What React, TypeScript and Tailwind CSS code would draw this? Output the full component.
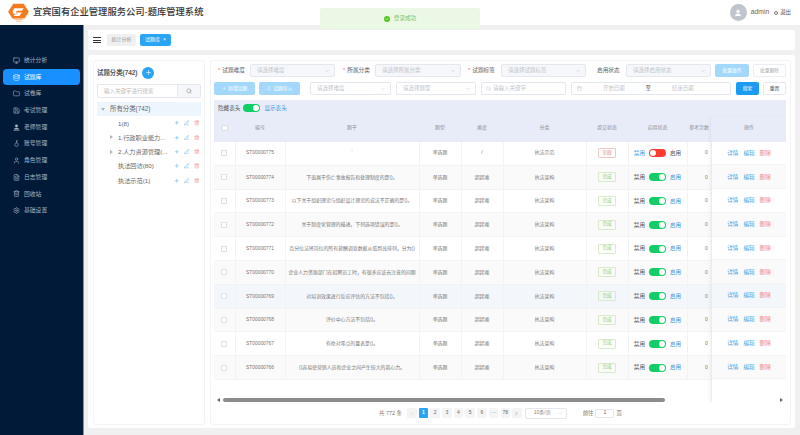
import {
  Calendar, Check, ChevronDown, ChevronLeft, ChevronRight, Database, FileText, Folder, Monitor, PenLine, Plus,
  Save, Search, Settings, Trash2, Upload, User,
} from 'lucide-react'

const font = { fontFamily: '"Liberation Sans", "Noto Sans CJK SC", sans-serif' }

function TeacherIcon({ className }: { className?: string }) {
  return (
    <svg viewBox="0 0 24 24" className={className} fill="currentColor">
      <circle cx="12" cy="7" r="5" />
      <path d="M3 17 C6 13 18 13 21 17 V19 H3 Z" />
      <rect x="2" y="20.5" width="20" height="2" />
    </svg>
  )
}

function AccountIcon({ className }: { className?: string }) {
  return (
    <svg viewBox="0 0 24 24" className={className} fill="none" stroke="currentColor" strokeWidth="2">
      <circle cx="12" cy="16" r="6" />
      <path d="M12 10 V2 H16 M12 6 H15" />
    </svg>
  )
}

const menu = [
  { label: '统计分析', icon: Monitor },
  { label: '试题库', icon: Database },
  { label: '试卷库', icon: Folder },
  { label: '考试管理', icon: Save },
  { label: '老师管理', icon: TeacherIcon },
  { label: '账号管理', icon: AccountIcon },
  { label: '角色管理', icon: User },
  { label: '日志管理', icon: FileText },
  { label: '回收站', icon: Trash2 },
  { label: '基础设置', icon: Settings },
]

const tree = [
  { label: '1(8)', arrow: false },
  { label: '1.行政职业能力...', arrow: true },
  { label: '2.人力资源管理(...', arrow: true },
  { label: '执法回访(80)', arrow: false },
  { label: '执法示范(1)', arrow: false },
]

const rows = [
  { id: 'ST00000775', title: '`', level: '/', cat: '执法示范', draft: true },
  { id: 'ST00000774', title: '下面属于伤亡事故报告和处理制度的是()。', level: '超超难', cat: '执法架构' },
  { id: 'ST00000773', title: '以下关于组织理论与组织设计理论的说法不正确的是()。', level: '超超难', cat: '执法架构' },
  { id: 'ST00000772', title: '关于制度化管理的描述，下列选项错误的是()。', level: '超超难', cat: '执法架构' },
  { id: 'ST00000771', title: '百分位法将岗位的所有薪酬调查数据从低到高排列，分为()', level: '超超难', cat: '执法架构' },
  { id: 'ST00000770', title: '企业人力资源部门在招聘员工时，有很多应该去注意的问题', level: '超超难', cat: '执法架构' },
  { id: 'ST00000769', title: '对培训效果进行反应评估的方法不包括()。', level: '超超难', cat: '执法架构', hover: true },
  { id: 'ST00000768', title: '评价中心方法不包括()。', level: '超超难', cat: '执法架构' },
  { id: 'ST00000767', title: '有绝对零点的量表是()。', level: '超超难', cat: '执法架构' },
  { id: 'ST00000766', title: '()容易使营销人员和企业之间产生较大的离心力。', level: '超超难', cat: '执法架构' },
]

function rowBg(i: number, hover?: boolean) {
  if (hover) return 'bg-[#f3f7fc]'
  return i % 2 === 1 ? 'bg-[#fafafa]' : 'bg-white'
}

function Toggle({ on = true }: { on?: boolean }) {
  return (
    <span className={`flex h-[8px] w-[17px] items-center rounded-full p-px ${on ? 'justify-end bg-[#13ce66]' : 'justify-start bg-[#ff3b30]'}`}>
      <span className="h-[6px] w-[6px] rounded-full bg-white" />
    </span>
  )
}

function SelectBox({ text, width, filled }: { text: string; width: string; filled?: boolean }) {
  return (
    <div className={`flex h-[13px] shrink-0 items-center justify-between rounded-[2px] border border-[#e4e7ed] pl-[6px] pr-[4px] ${width} ${filled ? 'bg-[#f5f7fa]' : 'bg-white'}`}>
      <span className="text-[5.5px] text-[#c0c4cc]">{text}</span>
      <ChevronDown className="h-[6px] w-[6px] text-[#c0c4cc]" />
    </div>
  )
}

function Label({ text, star = true, width }: { text: string; star?: boolean; width: string }) {
  return (
    <span className={`shrink-0 whitespace-nowrap text-[5.7px] text-[#606266] ${width}`}>
      {star && <span className="mr-[2px] text-[#f56c6c]">*</span>}
      {text}
    </span>
  )
}

export default function App() {
  const page = 1

  return (
    <div className="relative flex h-[435px] w-[800px] flex-col overflow-hidden bg-[#f0f0f0]" style={font}>
      <header className="flex h-[25px] shrink-0 items-center bg-white pl-[8px] pr-[9px]">
        <svg viewBox="0 0 24 22" className="h-[19px] w-[21px]">
          <path d="M6 1 H18 L24 10 L19 18 H5 L0 10 Z" fill="#f47a1f" />
          <path d="M7 6 H18 L16 9 H10 L9 11 H16 L13 15 H6 L8 13 H11 L12 12.5 H6 L5 10 Z" fill="#fff" />
          <path d="M7 19 H17 M9 21 H15" stroke="#f9b27a" strokeWidth="1" />
        </svg>
        <h1 className="ml-[4px] text-[9.3px] font-medium text-[#333]">宜宾国有企业管理服务公司-题库管理系统</h1>
        <div className="ml-auto flex items-center">
          <span className="flex h-[17px] w-[17px] items-center justify-center rounded-full bg-[#c0c4cc]">
            <User className="h-[8px] w-[8px] fill-white text-white" />
          </span>
          <span className="ml-[4px] text-[6.8px] text-[#666]">admin</span>
          <span className="ml-[5px] h-[4px] w-[4px] rounded-full border border-[#777]" />
          <span className="ml-[2px] text-[5.4px] text-[#555]">退出</span>
        </div>
      </header>

      <div className="flex min-h-0 flex-1">
        <aside className="w-[84px] shrink-0 border-r border-[#8b949e] bg-[#001a38] pt-[27px]">
          <nav className="flex flex-col">
            {menu.map((item, i) => {
              const Icon = item.icon
              return (
                <div
                  key={item.label}
                  className={`mx-[3px] flex h-[16.7px] items-center rounded-[4px] pl-[10px] ${i === 1 ? 'bg-[#1890ff] text-white' : 'text-[#a9b4c2]'}`}
                >
                  <Icon className="h-[7px] w-[7px]" />
                  <span className="ml-[4px] text-[5.8px]">{item.label}</span>
                </div>
              )
            })}
          </nav>
        </aside>

        <main className="flex min-w-0 flex-1 flex-col gap-[5px] pb-[7px] pl-[4px] pr-[5px] pt-[5px]">
          <div className="flex h-[20px] shrink-0 items-center rounded-[2px] bg-white px-[5px]">
            <div className="flex w-[8px] flex-col gap-[1.5px]">
              <span className="h-px bg-[#333]" />
              <span className="h-px bg-[#333]" />
              <span className="h-px bg-[#333]" />
            </div>
            <span className="ml-[6px] flex h-[12px] w-[29px] items-center justify-center rounded-[2px] bg-[#f0f0f0] text-[5px] text-[#999]">统计分析</span>
            <span className="ml-[4px] flex h-[12px] w-[31px] items-center justify-center gap-[3px] rounded-[2px] bg-[#2aa5f5] text-[5px] text-white">
              试题库 <span>×</span>
            </span>
          </div>

          <section className="flex min-h-0 flex-1 gap-[5px] rounded-[3px] bg-white pb-[3px] pl-[5px] pr-[4px] pt-[5px]">
            <div className="w-[112px] shrink-0 rounded-[3px] border border-[#f2f3f5] px-[3px]">
              <div className="flex h-[23px] items-center">
                <span className="text-[6.4px] font-bold text-[#555]">试题分类(742)</span>
                <span className="ml-[5px] flex h-[12px] w-[12px] items-center justify-center rounded-full bg-[#2aa5f5]">
                  <Plus className="h-[7px] w-[7px] text-white" />
                </span>
              </div>
              <div className="flex h-[14px] w-[104px] overflow-hidden rounded-[2px] border border-[#e4e7ed]">
                <span className="flex flex-1 items-center pl-[6px] text-[5.5px] text-[#bbb]">输入关键字进行搜索</span>
                <span className="flex w-[23px] items-center justify-center border-l border-[#e4e7ed] bg-[#f5f7fa]">
                  <Search className="h-[6px] w-[6px] text-[#888]" />
                </span>
              </div>
              <div className="mt-[4px] flex h-[14px] w-[104px] items-center bg-[#edf6fd] pl-[4px]">
                <span className="h-0 w-0 border-x-[2.5px] border-t-[3.5px] border-x-transparent border-t-[#b0b4ba]" />
                <span className="ml-[5px] text-[6.4px] text-[#666]">所有分类(742)</span>
              </div>
              {tree.map((node) => (
                <div key={node.label} className="flex h-[14.3px] w-[104px] items-center pl-[13px]">
                  <span className="flex w-[8px] shrink-0">
                    {node.arrow && <span className="h-0 w-0 border-y-[2.5px] border-l-[3.5px] border-y-transparent border-l-[#b0b4ba]" />}
                  </span>
                  <span className="whitespace-nowrap text-[6.2px] text-[#666]">{node.label}</span>
                  <span className="ml-auto flex items-center gap-[4.5px] pr-[2px]">
                    <Plus className="h-[5.5px] w-[5.5px] text-[#52a8e8]" />
                    <PenLine className="h-[5.5px] w-[5.5px] text-[#52a8e8]" />
                    <Trash2 className="h-[5.5px] w-[5.5px] text-[#f08a8a]" />
                  </span>
                </div>
              ))}
            </div>

            <div className="flex min-w-0 flex-1 flex-col rounded-[3px] border border-[#f2f3f5] px-[3px] pt-[2.5px]">
              <div className="flex h-[14px] shrink-0 items-center pl-[4px]">
                <Label text="试题难度" width="w-[32px]" />
                <SelectBox text="请选择难度" width="w-[85px]" filled />
                <span className="ml-[8px]"><Label text="所属分类" width="w-[32px] block" /></span>
                <SelectBox text="请选择所属分类" width="w-[86px]" filled />
                <span className="ml-[7px]"><Label text="试题标签" width="w-[33px] block" /></span>
                <SelectBox text="请选择试题标签" width="w-[85px]" filled />
                <span className="ml-[11px]"><Label text="启用状态" star={false} width="w-[29px] block" /></span>
                <SelectBox text="请选择启用状态" width="w-[85px]" filled />
                <span className="ml-[4px] flex h-[13px] w-[34px] items-center justify-center rounded-[2px] bg-[#a3d8fb] text-[4.8px] text-white">批量操作</span>
                <span className="ml-[4px] flex h-[13px] w-[33px] items-center justify-center rounded-[2px] border border-[#eceef1] text-[4.8px] text-[#aaa]">批量删除</span>
              </div>

              <div className="mt-[4px] flex h-[14px] shrink-0 items-center">
                <span className="flex h-[13px] w-[41px] items-center justify-center gap-[2px] rounded-[2px] bg-[#a3d8fb] text-[4.8px] text-white"><Plus className="h-[4.5px] w-[4.5px]" />新增试题</span>
                <span className="ml-[4px] flex h-[13px] w-[41px] items-center justify-center gap-[2px] rounded-[2px] bg-[#a3d8fb] text-[4.8px] text-white"><Upload className="h-[4.5px] w-[4.5px]" />试题导入</span>
                <span className="ml-[10px]"><SelectBox text="请选择难度" width="w-[81px]" /></span>
                <span className="ml-[5px]"><SelectBox text="请选择题型" width="w-[80px]" /></span>
                <div className="ml-[5px] flex h-[13px] w-[85px] items-center rounded-[2px] border border-[#e4e7ed] pl-[4px] text-[5.5px] text-[#c0c4cc]">
                  <Search className="mr-[2px] h-[5px] w-[5px]" />请输入关键字
                </div>
                <div className="ml-[5px] flex h-[13px] w-[160px] items-center rounded-[2px] border border-[#e4e7ed] pl-[5px] text-[5.4px] text-[#c0c4cc]">
                  <Calendar className="h-[5px] w-[5px]" />
                  <span className="ml-[21px]">开始日期</span>
                  <span className="ml-[21px] text-[#555]">至</span>
                  <span className="ml-[21px]">结束日期</span>
                </div>
                <span className="ml-[5px] flex h-[13px] w-[23px] items-center justify-center rounded-[2px] bg-[#1c9cf0] text-[4.8px] text-white">搜索</span>
                <span className="ml-[4px] flex h-[13px] w-[23px] items-center justify-center rounded-[2px] border border-[#e4e7ed] text-[4.8px] text-[#555]">重置</span>
              </div>

              <div className="mt-[4px] flex h-[17px] w-[572px] shrink-0 items-center bg-[#e7ecf8] pl-[4px]">
                <span className="text-[5.6px] text-[#555]">隐藏表头</span>
                <span className="ml-[3px]"><Toggle /></span>
                <span className="ml-[4px] text-[5.6px] text-[#3d9bdc]">显示表头</span>
              </div>

              <div className="flex h-[285.5px] w-[572px] shrink-0">
                <div className="flex w-[497px] shrink-0 flex-col">
                  <table className="w-[497px] table-fixed border-collapse text-center text-[4.9px] text-[#777]">
                    <colgroup>
                      <col className="w-[21px]" />
                      <col className="w-[50px]" />
                      <col className="w-[134px]" />
                      <col className="w-[42px]" />
                      <col className="w-[42px]" />
                      <col className="w-[83px]" />
                      <col className="w-[42px]" />
                      <col className="w-[59px]" />
                      <col className="w-[24px]" />
                    </colgroup>
                    <thead>
                      <tr className="h-[25px] bg-[#e7ecf8] text-[#8a8f99]">
                        <th className="pb-[2px] font-normal"><span className="mx-auto block h-[6px] w-[6px] rounded-[1px] border border-[#dcdfe6] bg-white" /></th>
                        <th className="pb-[2px] font-normal">编号</th>
                        <th className="pb-[2px] font-normal">题干</th>
                        <th className="pb-[2px] font-normal">题型</th>
                        <th className="pb-[2px] font-normal">难度</th>
                        <th className="pb-[2px] font-normal">分类</th>
                        <th className="pb-[2px] font-normal">提交状态</th>
                        <th className="pb-[2px] font-normal">启用状态</th>
                        <th className="overflow-hidden whitespace-nowrap pb-[2px] font-normal">参考次数</th>
                      </tr>
                    </thead>
                    <tbody>
                      {rows.map((row, i) => (
                        <tr key={row.id} className={`h-[23.8px] ${rowBg(i, row.hover)}`}>
                          <td className="border-b border-r border-[#f2f3f5]"><span className="mx-auto block h-[6px] w-[6px] rounded-[1px] border border-[#dcdfe6] bg-white" /></td>
                          <td className="border-b border-r border-[#f2f3f5]">{row.id}</td>
                          <td className="overflow-hidden whitespace-nowrap border-b border-r border-[#f2f3f5]">{row.title}</td>
                          <td className="border-b border-r border-[#f2f3f5]">单选题</td>
                          <td className="border-b border-r border-[#f2f3f5]">{row.level}</td>
                          <td className="border-b border-r border-[#f2f3f5]">{row.cat}</td>
                          <td className="border-b border-r border-[#f2f3f5]">
                            <span className={`mx-auto flex h-[10px] w-[18px] items-center justify-center rounded-[1px] border text-[4.6px] ${row.draft ? 'border-[#f5c6c6] text-[#ef8a8a]' : 'border-[#d5ecc6] text-[#8ccb62]'}`}>
                              {row.draft ? '草稿' : '完成'}
                            </span>
                          </td>
                          <td className="border-b border-r border-[#f2f3f5]">
                            <span className="flex items-center justify-center gap-[4px] text-[5.6px]">
                              <span className={row.draft ? 'text-[#3d9bdc]' : 'text-[#555]'}>禁用</span>
                              <Toggle on={!row.draft} />
                              <span className={row.draft ? 'text-[#555]' : 'text-[#3d9bdc]'}>启用</span>
                            </span>
                          </td>
                          <td className="border-b border-[#f2f3f5]"><span className="block pl-[14px]">0</span></td>
                        </tr>
                      ))}
                    </tbody>
                  </table>
                  <div className="mt-auto flex h-[4px] items-center pl-[3px]">
                    <span className="h-0 w-0 border-y-[2px] border-r-[3px] border-y-transparent border-r-[#666]" />
                    <span className="ml-[3px] h-[3.5px] w-[442px] rounded-full bg-[#8c8c8c]" />
                  </div>
                </div>

                <div className="flex w-[75px] shrink-0 flex-col border-l border-[#e9ebef] shadow-[-2px_0_3px_rgba(0,0,0,0.04)]">
                  <div className="flex h-[25px] items-center justify-center bg-[#e7ecf8] pb-[2px] text-[4.9px] text-[#8a8f99]">操作</div>
                  {rows.map((row, i) => (
                    <div key={row.id} className={`flex h-[23.8px] items-center justify-center gap-[5px] border-b border-[#f2f3f5] text-[5.6px] ${rowBg(i, row.hover)}`}>
                      <span className="text-[#4ba3e3]">详情</span>
                      <span className="text-[#4ba3e3]">编辑</span>
                      <span className="text-[#ee8585]">删除</span>
                    </div>
                  ))}
                  <div className="mt-auto flex h-[4px] items-center justify-end pr-[3px]">
                    <span className="h-0 w-0 border-y-[2px] border-l-[3px] border-y-transparent border-l-[#666]" />
                  </div>
                </div>
              </div>

              <div className="flex h-[22px] w-[572px] shrink-0 items-center pl-[165px] text-[5px] text-[#777]">
                <span className="w-[22px] shrink-0 whitespace-nowrap text-[5.4px]">共 772 条</span>
                <span className="ml-[6px] flex h-[10px] w-[9.5px] items-center justify-center rounded-[1px] bg-[#f4f4f5] text-[#c0c4cc]"><ChevronLeft className="h-[5px] w-[5px]" /></span>
                {['1', '2', '3', '4', '5', '6', '···', '78'].map((p) => (
                  <span
                    key={p}
                    className={`ml-[2.2px] flex h-[10px] w-[9.5px] items-center justify-center rounded-[1px] ${p === String(page) ? 'bg-[#2aa5f5] font-bold text-white' : 'bg-[#f4f4f5] text-[#666]'}`}
                  >
                    {p}
                  </span>
                ))}
                <span className="ml-[2.2px] flex h-[10px] w-[9.5px] items-center justify-center rounded-[1px] bg-[#f4f4f5] text-[#666]"><ChevronRight className="h-[5px] w-[5px]" /></span>
                <div className="ml-[3px] flex h-[11px] w-[42px] items-center justify-between rounded-[2px] border border-[#e4e7ed] pl-[8px] pr-[3px]">
                  <span className="text-[#888]">10条/页</span>
                  <ChevronDown className="h-[5px] w-[5px] text-[#c0c4cc]" />
                </div>
                <span className="ml-[16px] text-[5.4px]">前往</span>
                <span className="mx-[2px] flex h-[9px] w-[19px] items-center justify-center rounded-[2px] border border-[#e4e7ed] text-[#666]">1</span>
                <span className="text-[5.4px]">页</span>
              </div>
            </div>
          </section>
        </main>
      </div>

      <div className="absolute left-[320px] top-[8px] flex h-[21px] w-[160px] items-center justify-center gap-[4px] rounded-[2px] bg-[#ecf8e6]">
        <span className="flex h-[6px] w-[6px] items-center justify-center rounded-full bg-[#52c41a]">
          <Check className="h-[4px] w-[4px] text-white" strokeWidth={4} />
        </span>
        <span className="text-[5.6px] text-[#7cc35a]">登录成功</span>
      </div>
    </div>
  )
}
